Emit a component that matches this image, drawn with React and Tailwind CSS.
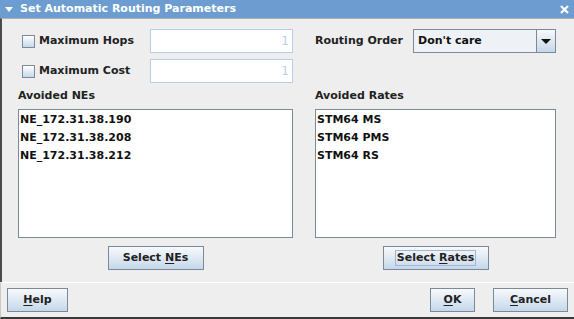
import React from "react";

const btn =
  "flex items-center justify-center h-[24px] border border-[#7a8a99] bg-[linear-gradient(to_bottom,#f7f9fb_0%,#e6eef6_35%,#c6d7ea_100%)] text-[#222] font-bold text-[11px]";

function CheckBox() {
  return (
    <div className="w-[13px] h-[13px] border border-[#7a8a99] bg-[linear-gradient(to_bottom,#ffffff,#c7d8ea)] shrink-0" />
  );
}

function Field() {
  return (
    <div className="w-[143px] h-[24px] ml-auto border border-[#b8cfe5] bg-white flex items-center justify-end pr-[3px] text-[#b8cfe5] font-normal text-[12px]">
      1
    </div>
  );
}

function List({ items }) {
  return (
    <div className="h-[129px] border border-[#7a8a99] bg-white pt-[1px] pl-[1px]">
      {items.map((t) => (
        <div key={t} className="h-[18px] leading-[18px] text-[11px] font-bold text-[#111]">
          {t}
        </div>
      ))}
    </div>
  );
}

export default function App() {
  return (
    <div
      className="w-[574px] h-[319px] bg-[#eeeeee] flex flex-col text-[#222] overflow-hidden"
      style={{ fontFamily: '"DejaVu Sans", sans-serif' }}
    >
      {/* Title bar */}
      <div className="h-[18px] bg-[#6d9dd0] flex items-center text-white font-bold text-[11px] shrink-0">
        <svg width="8" height="5" viewBox="0 0 8 5" className="ml-[5px] mr-[7px]">
          <polygon points="0,0 8,0 4,5" fill="white" />
        </svg>
        <span>Set Automatic Routing Parameters</span>
        <svg width="9" height="9" viewBox="0 0 9 9" className="ml-auto mr-[5px]">
          <path d="M1 1 L8 8 M8 1 L1 8" stroke="white" strokeWidth="2.2" />
        </svg>
      </div>

      {/* Main */}
      <div className="flex-1 border-l-2 border-l-[#4b4b4b] border-t border-t-[#b0b0b0] pt-[10px] pl-[16px] pr-[18px]">
        <div className="grid grid-cols-[275px_241px] gap-x-[22px]">
          {/* left column */}
          <div className="flex flex-col">
            <div className="flex items-center h-[24px] pl-[4px]">
              <CheckBox />
              <span className="ml-[4px] font-bold text-[11px]">Maximum Hops</span>
              <Field />
            </div>
            <div className="flex items-center h-[24px] pl-[4px] mt-[6px]">
              <CheckBox />
              <span className="ml-[4px] font-bold text-[11px]">Maximum Cost</span>
              <Field />
            </div>
            <div className="h-[15px] mt-[5px] leading-[15px] font-bold text-[11px]">Avoided NEs</div>
            <div className="mt-[6px] w-[275px]">
              <List items={["NE_172.31.38.190", "NE_172.31.38.208", "NE_172.31.38.212"]} />
            </div>
            <div className="flex justify-center mt-[8px]">
              <div className={btn + " w-[96px]"}>
                Select&nbsp;<span className="underline underline-offset-2">N</span>Es
              </div>
            </div>
          </div>
          {/* right column */}
          <div className="flex flex-col">
            <div className="flex items-center h-[24px]">
              <span className="font-bold text-[11px]">Routing Order</span>
              <div className="ml-auto w-[143px] h-[24px] border border-[#7a8a99] flex bg-[#eef1f5]">
                <div className="flex-1 flex items-center pl-[4px] font-bold text-[11px] text-[#111]">Don't care</div>
                <div className="w-[19px] border-l border-[#7a8a99] bg-[linear-gradient(to_bottom,#f7f9fb,#c6d7ea)] flex items-center justify-center">
                  <svg width="10" height="5" viewBox="0 0 10 5">
                    <polygon points="0,0 10,0 5,5" fill="#111" />
                  </svg>
                </div>
              </div>
            </div>
            <div className="h-[24px] mt-[6px]" />
            <div className="h-[15px] mt-[5px] leading-[15px] font-bold text-[11px]">Avoided Rates</div>
            <div className="mt-[6px]">
              <List items={["STM64 MS", "STM64 PMS", "STM64 RS"]} />
            </div>
            <div className="flex justify-center mt-[8px]">
              <div className={btn + " w-[106px]"}>
                <span className="border border-[#a3b8cc] px-[1px] leading-[14px]">
                  Select&nbsp;<span className="underline underline-offset-2">R</span>ates
                </span>
              </div>
            </div>
          </div>
        </div>
      </div>

      {/* Bottom */}
      <div className="h-[37px] shrink-0 border-t border-t-white border-l border-l-[#c8c8c8] border-b-2 border-b-[#3a3a3a] flex items-center px-[6px]">
        <div className={btn + " w-[61px]"}>
          <span className="underline underline-offset-2">H</span>elp
        </div>
        <div className={btn + " w-[45px] ml-auto"}>
          <span className="underline underline-offset-2">O</span>K
        </div>
        <div className={btn + " w-[75px] ml-[18px]"}>
          <span className="underline underline-offset-2">C</span>ancel
        </div>
      </div>
    </div>
  );
}
